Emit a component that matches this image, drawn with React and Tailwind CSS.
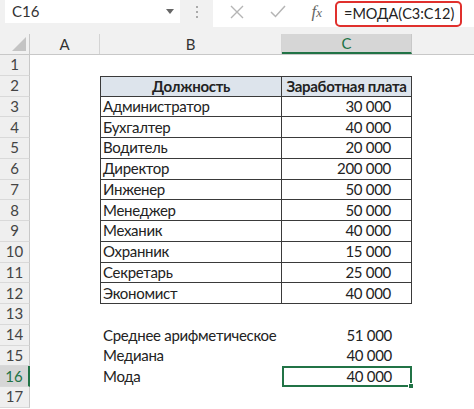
import React from 'react';

const font = { fontFamily: 'Lato, "Open Sans", sans-serif' };

const staff = [
  ['Администратор', '30 000'],
  ['Бухгалтер', '40 000'],
  ['Водитель', '20 000'],
  ['Директор', '200 000'],
  ['Инженер', '50 000'],
  ['Менеджер', '50 000'],
  ['Механик', '40 000'],
  ['Охранник', '15 000'],
  ['Секретарь', '25 000'],
  ['Экономист', '40 000'],
];

const stats = [
  ['Среднее арифметическое', '51 000'],
  ['Медиана', '40 000'],
  ['Мода', '40 000'],
];

function RowHead({ n, active }) {
  return (
    <div
      className={
        'flex items-center justify-center text-[15px] tracking-normal border-b border-[#d9d9d9] ' +
        (active
          ? 'bg-[#d6d6d6] text-[#217346] border-r-2 border-r-[#217346]'
          : 'bg-[#efefef] text-[#444] border-r border-r-[#c8c8c8]')
      }
    >
      {n}
    </div>
  );
}

function Row({ n, active, children }) {
  return (
    <div className="grid grid-cols-[30px_70px_182px_130px_1fr] h-[20.75px] leading-none">
      <RowHead n={n} active={active} />
      {children || (
        <>
          <div />
          <div />
          <div />
          <div />
        </>
      )}
    </div>
  );
}

export default function App() {
  return (
    <div className="w-[474px] h-[409px] overflow-hidden bg-white text-[#222]" style={font}>
      {/* formula bar */}
      <div className="h-[34px] bg-[#f1f1f1] flex items-start">
        <div className="ml-[5px] w-[175px] h-[23px] bg-white flex items-center justify-between pl-[7px] pr-[6px] text-[15px] text-[#333]">
          <span>C16</span>
          <svg width="8" height="5" viewBox="0 0 8 5"><path d="M0 0h8L4 5z" fill="#666" /></svg>
        </div>
        <div className="w-[33px] h-[23px] flex flex-col items-center justify-center gap-[3px]">
          <span className="w-[2px] h-[2px] bg-[#aaa]" />
          <span className="w-[2px] h-[2px] bg-[#aaa]" />
          <span className="w-[2px] h-[2px] bg-[#aaa]" />
        </div>
        <div className="h-[27px] flex-1 bg-white flex items-center">
          <div className="w-[122px] h-[23px] self-start flex items-center justify-around pl-[4px]">
            <svg width="14" height="14" viewBox="0 0 14 14"><path d="M1 1l12 12M13 1L1 13" stroke="#b5b5b5" strokeWidth="1.4" /></svg>
            <svg width="16" height="13" viewBox="0 0 16 13"><path d="M1 7l4.5 4.5L15 1" stroke="#b5b5b5" strokeWidth="1.5" fill="none" /></svg>
            <span className="italic text-[17px] text-[#666]" style={{ fontFamily: '"Liberation Serif", serif' }}>
              f<span className="text-[13px]">x</span>
            </span>
          </div>
          <div className="mt-[1px] self-start w-[127px] h-[26px] border-2 border-[#e0302d] rounded-[5px] flex items-center pl-[7px] text-[14.5px] text-[#222] whitespace-nowrap">
            =МОДА(C3:C12)
          </div>
        </div>
      </div>

      {/* column headers */}
      <div className="grid grid-cols-[30px_70px_182px_130px_1fr] h-[21px] bg-[#f1f1f1] text-[15px] leading-none text-[#333] border-b border-[#c8c8c8]">
        <div className="relative border-r border-[#c8c8c8]">
          <svg className="absolute right-[3px] bottom-[3px]" width="14" height="14" viewBox="0 0 14 14"><path d="M14 0V14H0z" fill="#c4c4c4" /></svg>
        </div>
        <div className="flex items-center justify-center border-r border-[#d4d4d4]">A</div>
        <div className="flex items-center justify-center border-r border-[#d4d4d4]">B</div>
        <div className="flex items-center justify-center bg-[#d6d6d6] text-[#217346] border-b-2 border-[#217346] border-r border-r-[#c8c8c8]">C</div>
        <div />
      </div>

      <div className="text-[15px] tracking-[-0.3px]">
        <Row n={1} />
        <Row n={2}>
          <div />
          <div className="bg-[#dde4ec] border border-[#3a3a3a] flex items-center justify-center font-bold">Должность</div>
          <div className="bg-[#dde4ec] border-y border-r border-[#3a3a3a] flex items-center justify-center font-bold whitespace-nowrap">Заработная плата</div>
          <div />
        </Row>
        {staff.map(([name, pay], i) => (
          <Row key={name} n={i + 3}>
            <div />
            <div className="border-x border-b border-[#3a3a3a] flex items-center pl-[2px]">{name}</div>
            <div className="border-r border-b border-[#3a3a3a] flex items-center justify-end pr-[20px]">{pay}</div>
            <div />
          </Row>
        ))}
        <Row n={13} />
        {stats.map(([label, val], i) => {
          const active = i === 2;
          return (
            <Row key={label} n={i + 14} active={active}>
              <div />
              <div className="flex items-center pl-[3px] whitespace-nowrap">{label}</div>
              <div
                className={
                  'relative flex items-center justify-end ' +
                  (active ? 'border-2 border-[#217346] pr-[18px]' : 'pr-[20px]')
                }
              >
                {val}
                {active && <span className="absolute right-[-4px] bottom-[-4px] w-[6px] h-[6px] bg-[#217346] border border-white" />}
              </div>
              <div />
            </Row>
          );
        })}
        <Row n={17} />
      </div>
    </div>
  );
}
